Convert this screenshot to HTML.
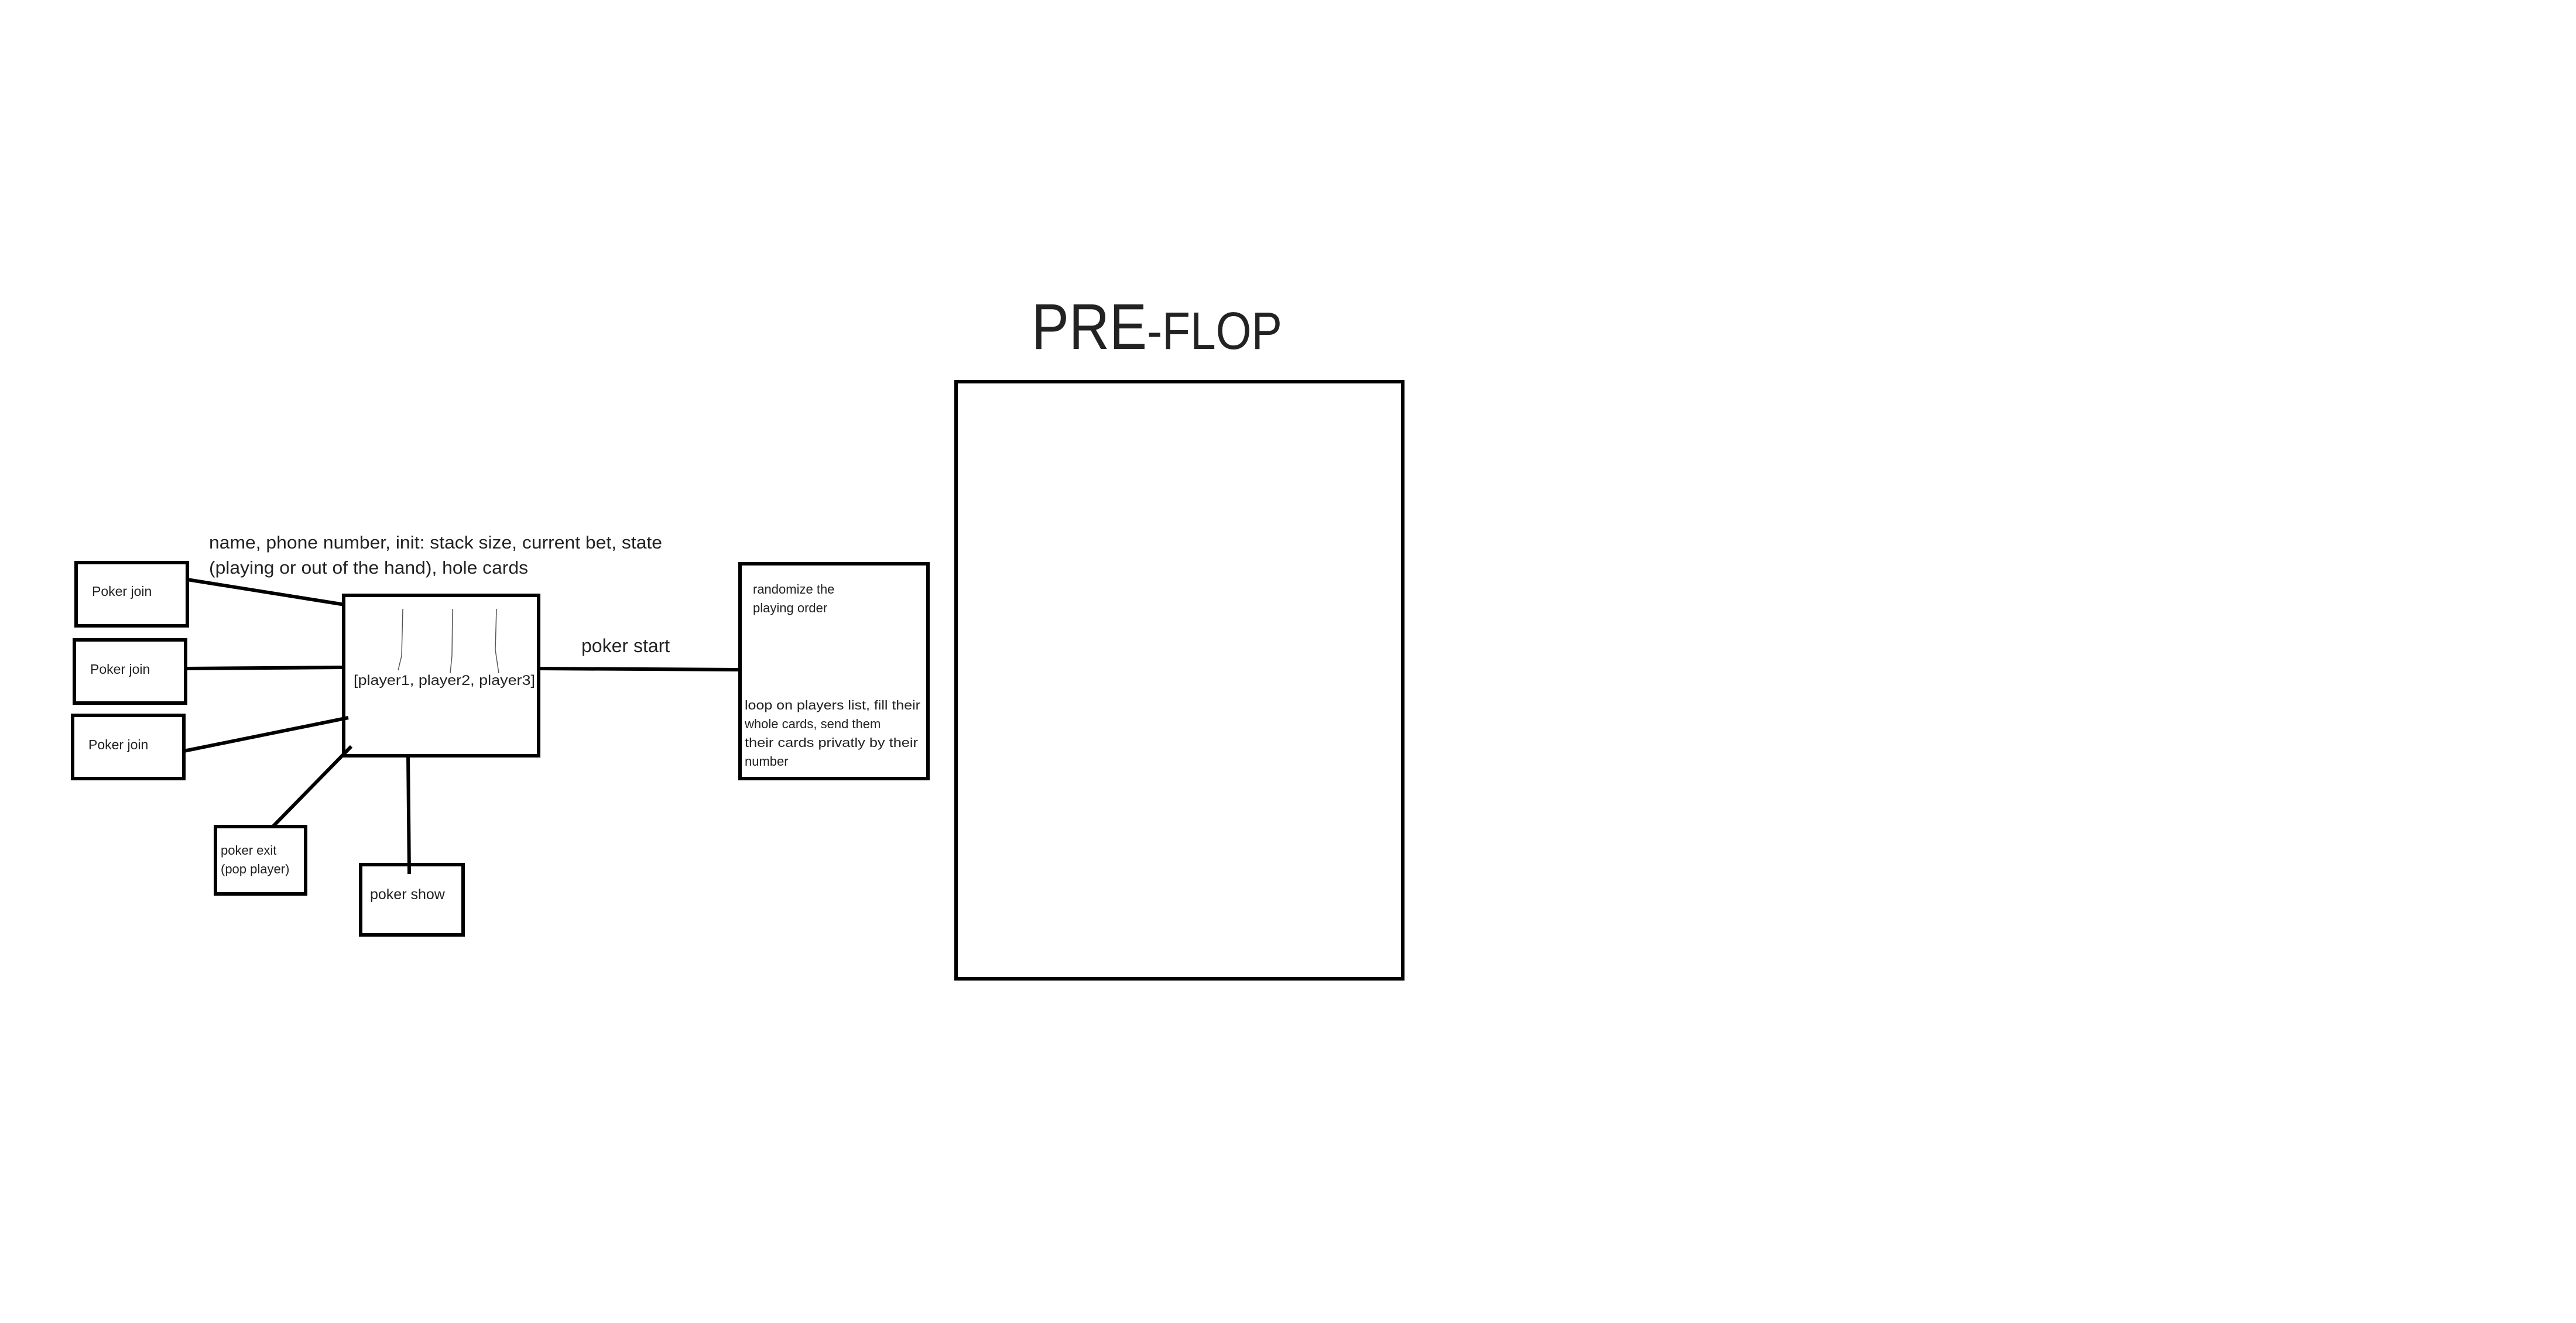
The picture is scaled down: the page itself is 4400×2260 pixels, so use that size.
<!DOCTYPE html>
<html><head><meta charset="utf-8"><style>
html,body{margin:0;padding:0;background:#fff;width:4400px;height:2260px;overflow:hidden}
svg{display:block}
text{font-family:"Liberation Sans",sans-serif;fill:#222}
</style></head><body>
<svg width="4400" height="2260" viewBox="0 0 4400 2260" xmlns="http://www.w3.org/2000/svg">
<rect width="4400" height="2260" fill="#fff"/>
<g fill="none" stroke="#000" stroke-width="6">
<rect x="1633" y="652" width="763" height="1020"/>
<rect x="130" y="961" width="190" height="108"/>
<rect x="127" y="1093" width="190" height="108"/>
<rect x="124" y="1222" width="190" height="108"/>
<rect x="587" y="1017" width="333" height="274"/>
<rect x="1264" y="963" width="321" height="367"/>
<rect x="368" y="1412" width="154" height="115"/>
<rect x="616" y="1477" width="175" height="120"/>
<line x1="320" y1="990" x2="589" y2="1033"/>
<line x1="320" y1="1142" x2="586" y2="1140"/>
<line x1="314" y1="1283" x2="595" y2="1226"/>
<line x1="920" y1="1142" x2="1264" y2="1144"/>
<line x1="697" y1="1288" x2="699" y2="1493"/>
<line x1="600" y1="1275" x2="466" y2="1412"/>
</g>
<g fill="none" stroke="#555" stroke-width="1.5">
<path d="M688 1040 L686 1120 L680 1145"/>
<path d="M773 1040 L772 1120 L769 1150"/>
<path d="M848 1040 L846 1110 L852 1150"/>
</g>
<text x="1762" y="596" font-size="110" textLength="428" lengthAdjust="spacingAndGlyphs">PRE<tspan font-size="90">-FLOP</tspan></text>
<text x="357" y="937" font-size="31" textLength="774" lengthAdjust="spacingAndGlyphs">name, phone number, init: stack size, current bet, state</text>
<text x="357" y="980" font-size="31" textLength="545" lengthAdjust="spacingAndGlyphs">(playing or out of the hand), hole cards</text>
<text x="157" y="1018" font-size="23">Poker join</text>
<text x="154" y="1151" font-size="23">Poker join</text>
<text x="151" y="1280" font-size="23">Poker join</text>
<text x="604" y="1170" font-size="24" textLength="310" lengthAdjust="spacingAndGlyphs">[player1, player2, player3]</text>
<text x="993" y="1114" font-size="32">poker start</text>
<text x="1286" y="1014" font-size="22">randomize the</text>
<text x="1286" y="1046" font-size="22">playing order</text>
<text x="1272" y="1212" font-size="22" textLength="300" lengthAdjust="spacingAndGlyphs">loop on players list, fill their</text>
<text x="1272" y="1244" font-size="22">whole cards, send them</text>
<text x="1272" y="1276" font-size="22" textLength="296" lengthAdjust="spacingAndGlyphs">their cards privatly by their</text>
<text x="1272" y="1308" font-size="22">number</text>
<text x="377" y="1460" font-size="22">poker exit</text>
<text x="377" y="1492" font-size="22">(pop player)</text>
<text x="632" y="1536" font-size="25">poker show</text>
</svg>
</body></html>
